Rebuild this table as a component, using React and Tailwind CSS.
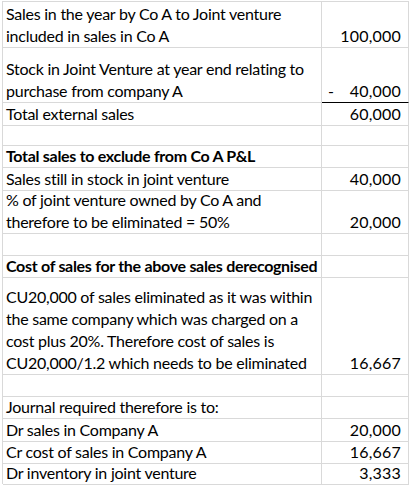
const rows = [
  { h: "h-[46px]", lines: ["Sales in the year by Co A to Joint venture", "included in sales in Co A"], value: "100,000" },
  { h: "h-[55px]", lines: ["Stock in Joint Venture at year end relating to", "purchase from company A"], value: "40,000", dash: true, underline: true },
  { h: "h-[21px]", lines: ["Total external sales"], value: "60,000" },
  { h: "h-[22px]", lines: [] },
  { h: "h-[22px]", lines: ["Total sales to exclude from Co A P&L"], bold: true },
  { h: "h-[22px]", lines: ["Sales still in stock in joint venture"], value: "40,000" },
  { h: "h-[44px]", lines: ["% of joint venture owned by Co A and", "therefore to be eliminated = 50%"], value: "20,000" },
  { h: "h-[22px]", lines: [] },
  { h: "h-[22px]", lines: ["Cost of sales for the above sales derecognised"], bold: true },
  {
    h: "h-[97px]",
    lines: [
      "CU20,000 of sales eliminated as it was within",
      "the same company which was charged on a",
      "cost plus 20%. Therefore cost of sales is",
      "CU20,000/1.2 which needs to be eliminated",
    ],
    value: "16,667",
  },
  { h: "h-[22px]", lines: [] },
  { h: "h-[22px]", lines: ["Journal required therefore is to:"] },
  { h: "h-[22px]", lines: ["Dr sales in Company A"], value: "20,000" },
  { h: "h-[21px]", lines: ["Cr cost of sales in Company A"], value: "16,667" },
  { h: "h-[22px]", lines: ["Dr inventory in joint venture"], value: "3,333" },
]

export default function App() {
  return (
    <div className="w-[417px] h-[489px] bg-white text-black font-['Lato','Carlito','Liberation_Sans',sans-serif] text-[16px] leading-[22px]">
      <div className="ml-[2px] mt-[1px] w-[407px] box-border border-l border-t border-[#d9d9d9]">
        {rows.map((r, i) => (
          <div key={i} className={`grid grid-cols-[319px_87px] ${r.h}`}>
            <div className={`flex flex-col justify-end pl-[3px] border-r border-b border-[#d9d9d9] whitespace-nowrap overflow-hidden ${r.bold ? "font-bold tracking-[-0.3px]" : "tracking-[-0.25px]"}`}>
              {r.lines.map((l, j) => (
                <div key={j}>{l}</div>
              ))}
            </div>
            <div className={`flex items-end justify-between pl-[6px] pr-[7px] border-r border-b ${r.underline ? "border-b-black" : "border-b-[#d9d9d9]"} border-r-[#d9d9d9]`}>
              <span>{r.dash ? "-" : ""}</span>
              <span className="tracking-[0.2px]">{r.value}</span>
            </div>
          </div>
        ))}
      </div>
    </div>
  )
}
